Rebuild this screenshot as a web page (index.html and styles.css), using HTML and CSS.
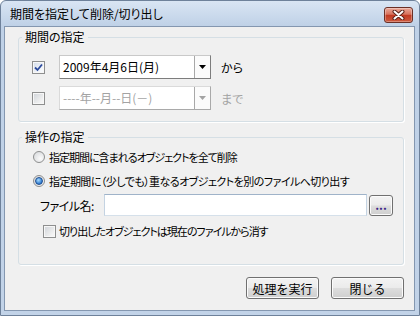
FILE: index.html
```html
<!DOCTYPE html>
<html lang="ja">
<head>
    <meta charset="UTF-8">
    <title>期間を指定して削除/切り出し</title>
    <link rel="stylesheet" href="styles.css">
</head>
<body>
<div class="window">
    <div class="titlebar">
        <span class="title">期間を指定して削除/切り出し</span>
        <span class="close-btn">
            <svg width="13" height="10" viewBox="0 0 13 10">
                <path d="M2.5 1.5 L10.5 8.5 M10.5 1.5 L2.5 8.5" stroke="#5a2218" stroke-width="4" stroke-linecap="round"/>
                <path d="M2.5 1.5 L10.5 8.5 M10.5 1.5 L2.5 8.5" stroke="#fff" stroke-width="2" stroke-linecap="round"/>
            </svg>
        </span>
    </div>
    <div class="client">
        <fieldset class="group period">
            <legend>期間の指定</legend>
            <div class="date-row">
                <span class="check checked">
                    <svg width="11" height="11" viewBox="0 0 11 11"><path d="M2 5.5 L4.5 8 L9 2.5" fill="none" stroke="#2c4a9c" stroke-width="1.8"/></svg>
                </span>
                <div class="picker">
                    <span class="picker-value">2009年4月6日(月)</span>
                    <span class="picker-drop"><svg width="7" height="4" viewBox="0 0 7 4"><path d="M0 0h7L3.5 4z"/></svg></span>
                </div>
                <span class="suffix">から</span>
            </div>
            <div class="date-row">
                <span class="check"></span>
                <div class="picker disabled">
                    <span class="picker-value">----年--月--日(－)</span>
                    <span class="picker-drop"><svg width="7" height="4" viewBox="0 0 7 4"><path d="M0 0h7L3.5 4z"/></svg></span>
                </div>
                <span class="suffix disabled">まで</span>
            </div>
        </fieldset>

        <fieldset class="group operation">
            <legend>操作の指定</legend>
            <div class="option first"><span class="radio"></span>指定期間に含まれるオブジェクトを全て削除</div>
            <div class="option wide"><span class="radio selected"></span>指定期間に（少しでも）重なるオブジェクトを別のファイルへ切り出す</div>
            <div class="file-row">
                <label class="file-label" for="filename">ファイル名:</label>
                <input class="file-input" type="text" id="filename">
                <button class="btn browse">...</button>
            </div>
            <div class="option sub"><span class="check"></span>切り出したオブジェクトは現在のファイルから消す</div>
        </fieldset>

        <div class="actions">
            <button class="btn">処理を実行</button>
            <button class="btn">閉じる</button>
        </div>
    </div>
</div>
</body>
</html>
```

FILE: styles.css
```css
* {
    box-sizing: border-box;
}

body {
    margin: 0;
    background: #ffffff;
    font-family: "Noto Sans CJK JP", "Noto Sans", sans-serif;
    font-size: 12px;
    font-feature-settings: "palt";
    color: #000;
}

.window {
    width: 420px;
    height: 316px;
    display: flex;
    flex-direction: column;
    border: 1px solid #6e819a;
    border-radius: 6px 6px 0 0;
    background: linear-gradient(#d9e5f3, #bfd1e7 25px, #c2d3e8);
    padding: 0 4px 4px 3px;
}

.titlebar {
    height: 25px;
    display: flex;
    justify-content: space-between;
    align-items: flex-start;
}

.title {
    padding: 5px 0 0 6px;
    line-height: 16px;
    font-size: 12px;
}

.close-btn {
    margin: 6px 2px 0 0;
    width: 29px;
    height: 16px;
    display: flex;
    align-items: center;
    justify-content: center;
    border: 1px solid #6b3026;
    border-radius: 3px;
    background: linear-gradient(#eaa99a 0%, #d8725c 45%, #c23a22 52%, #cd5a3e 100%);
    box-shadow: inset 0 0 0 1px rgba(255, 255, 255, 0.3);
}

.client {
    flex: 1;
    border: 1px solid #8497b0;
    background: #f0f0f0;
    padding: 0 10px 0 13px;
}

.group {
    margin: 0;
    padding: 0;
    border: 1px solid #d5dfe5;
    border-radius: 3px;
    box-shadow: 1px 1px 0 #ffffff;
}

.group legend {
    margin-left: 3px;
    padding: 0 3px;
    line-height: 14px;
}

.period {
    margin-top: 3px;
    padding: 11px 0 11px 0;
}

.date-row {
    height: 24px;
    display: flex;
    align-items: center;
}

.date-row + .date-row {
    margin-top: 7px;
}

.date-row .check {
    margin-left: 13px;
    margin-right: 14px;
}

.check {
    width: 13px;
    height: 13px;
    flex: none;
    display: flex;
    align-items: center;
    justify-content: center;
    border: 1px solid #8e8f8f;
    background: linear-gradient(135deg, #cfd3d8, #f4f4f4 80%);
    box-shadow: inset 0 0 0 1px #f7f7f7;
}

.check.checked {
    background: linear-gradient(135deg, #d3dcea, #f7f9fc 80%);
}

.picker {
    width: 152px;
    height: 24px;
    display: flex;
    border: 1px solid;
    border-color: #c9c9c9 #7d7d7d #7d7d7d #c9c9c9;
    background: #ffffff;
}

.picker-value {
    flex: 1;
    padding-left: 3px;
    line-height: 22px;
    font-feature-settings: normal;
}

.picker-drop {
    width: 16px;
    display: flex;
    align-items: center;
    justify-content: center;
    border-left: 1px solid #a8a8a8;
    background: #fbfbfb;
}

.picker.disabled {
    border-color: #dadada #a9a9a9 #a9a9a9 #dadada;
}

.picker.disabled .picker-value {
    color: #a3a3a3;
}

.picker.disabled .picker-drop path {
    fill: #a3a3a3;
}

.suffix {
    margin-left: 10px;
}

.suffix.disabled {
    color: #a3a3a3;
}

.operation {
    margin-top: 8px;
    padding: 5px 0 25px 0;
}

.option {
    height: 16px;
    display: flex;
    align-items: center;
    margin-top: 8px;
    font-size: 11px;
    letter-spacing: -1px;
}

.option.first {
    margin-top: 0;
}

.option.wide {
    letter-spacing: -0.55px;
}

.radio {
    width: 12px;
    height: 12px;
    margin: 0 4px 0 14px;
    flex: none;
    display: flex;
    align-items: center;
    justify-content: center;
    border: 1px solid #8e8f8f;
    border-radius: 50%;
    background: radial-gradient(circle at 65% 65%, #fbfbfb, #d3d5d8);
}

.radio.selected::after {
    content: "";
    width: 6px;
    height: 6px;
    border-radius: 50%;
    border: 1px solid #1f4e8f;
    background: radial-gradient(circle at 40% 35%, #a8dcff, #2d79cf 70%);
}

.file-row {
    display: flex;
    align-items: center;
    margin-top: 5px;
}

.file-label {
    width: 64px;
    margin-left: 21px;
    letter-spacing: -0.5px;
}

.file-input {
    width: 263px;
    height: 22px;
    margin: 0 2px 0 0;
    border: 1px solid;
    border-color: #9fb3c9 #c4d3e2 #d5e0ea #c4d3e2;
    background: #ffffff;
}

.btn {
    height: 22px;
    padding: 0;
    font-family: inherit;
    font-size: 12px;
    color: #000;
    border: 1px solid #707070;
    border-radius: 3px;
    background: linear-gradient(#f3f3f3 0%, #ebebeb 48%, #dddddd 52%, #cfcfcf 100%);
    box-shadow: inset 0 0 0 1px #fbfbfb;
}

.browse {
    width: 24px;
    height: 21px;
    line-height: 14px;
    color: #3a1f86;
    font-weight: bold;
}

.option.sub {
    margin-top: 7px;
}

.option.sub .check {
    margin: 0 3px 0 24px;
}

.actions {
    display: flex;
    justify-content: flex-end;
    gap: 12px;
    margin-top: 12px;
}

.actions .btn {
    width: 73px;
}
```
